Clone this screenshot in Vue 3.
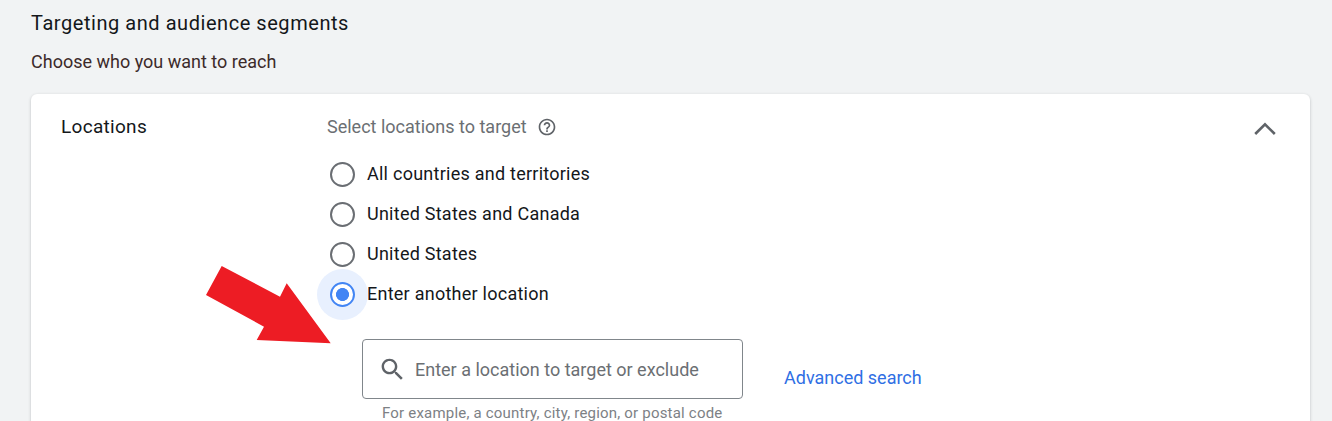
<script setup>
const options = [
  { label: 'All countries and territories', selected: false },
  { label: 'United States and Canada', selected: false },
  { label: 'United States', selected: false },
  { label: 'Enter another location', selected: true },
]
</script>

<template>
  <div class="page">
    <h2 class="title">Targeting and audience segments</h2>
    <p class="subtitle">Choose who you want to reach</p>
    <section class="card">
      <div class="name">Locations</div>
      <div class="body">
        <div class="heading">
          <span class="heading-text">Select locations to target</span>
          <svg class="help" viewBox="0 0 24 24" width="20" height="20" fill="#5f6368">
            <path d="M11 18h2v-2h-2v2zm1-16C6.48 2 2 6.48 2 12s4.48 10 10 10 10-4.48 10-10S17.52 2 12 2zm0 18c-4.41 0-8-3.59-8-8s3.59-8 8-8 8 3.59 8 8-3.59 8-8 8zm0-14c-2.21 0-4 1.79-4 4h2c0-1.1.9-2 2-2s2 .9 2 2c0 2-3 1.75-3 5h2c0-2.25 3-2.5 3-5 0-2.21-1.79-4-4-4z"/>
          </svg>
        </div>
        <ul class="options">
          <li v-for="o in options" :key="o.label" class="option">
            <span class="radio" :class="{ on: o.selected }"></span>
            <span class="option-label">{{ o.label }}</span>
          </li>
        </ul>
        <div class="search-row">
          <div class="search-col">
            <div class="input">
              <svg viewBox="0 0 24 24" width="29" height="29" fill="#5f6368">
                <path d="M15.5 14h-.79l-.28-.27C15.41 12.59 16 11.11 16 9.5 16 5.91 13.09 3 9.5 3S3 5.91 3 9.5 5.91 16 9.5 16c1.61 0 3.09-.59 4.23-1.57l.27.28v.79l5 4.99L20.49 19l-4.99-5zm-6 0C7.01 14 5 11.99 5 9.5S7.01 5 9.5 5 14 7.01 14 9.5 11.99 14 9.5 14z"/>
              </svg>
              <span>Enter a location to target or exclude</span>
            </div>
            <div class="hint">For example, a country, city, region, or postal code</div>
          </div>
          <a class="advanced">Advanced search</a>
        </div>
      </div>
      <svg class="chevron" viewBox="0 0 22 14" width="22" height="14" fill="none" stroke="#5f6368" stroke-width="2.6">
        <path d="M1.2 12 11 2.4 20.8 12"/>
      </svg>
    </section>
    <svg class="arrow" viewBox="0 0 1332 421" width="1332" height="421">
      <polygon fill="#ed1c24" points="221.7,266 280,296.7 286.7,283.3 330.7,343.3 256.7,340 264,326.7 206,295"/>
    </svg>
  </div>
</template>

<style scoped>
.page {
  position: relative;
  box-sizing: border-box;
  height: 421px;
  overflow: hidden;
  padding: 11px 22px 0 31px;
  background: #f1f3f4;
  font-family: Roboto, "Liberation Sans", sans-serif;
  color: #202124;
}
.title {
  margin: 0;
  font-size: 20px;
  line-height: 25px;
  font-weight: 450;
  letter-spacing: 0.55px;
  color: #14171a;
}
.subtitle {
  margin: 14px 0 0;
  font-size: 18px;
  line-height: 24px;
  color: #3c2a2a;
}
.card {
  display: flex;
  box-sizing: border-box;
  height: 420px;
  margin-top: 20px;
  padding: 21px 34px 0 30px;
  background: #fff;
  border-radius: 6px;
  box-shadow: 0 1px 3px rgba(60, 64, 67, 0.3);
}
.name {
  width: 266px;
  flex: none;
  font-size: 19px;
  font-weight: 450;
  line-height: 24px;
  letter-spacing: 0.3px;
  color: #14171a;
}
.body {
  flex: 1;
}
.heading {
  display: flex;
  align-items: center;
  gap: 10px;
  height: 24px;
  font-size: 18px;
  color: #6b6f73;
}
.heading-text {
  padding-bottom: 2px;
}
.help {
  flex: none;
}
.options {
  list-style: none;
  margin: 15px 0 0;
  padding: 0;
}
.option {
  display: flex;
  align-items: center;
  gap: 12.5px;
  height: 40px;
  padding-left: 2.5px;
  font-size: 18px;
  font-weight: 450;
  letter-spacing: 0.25px;
  color: #14171a;
}
.option-label {
  padding-bottom: 2px;
}
.radio {
  position: relative;
  box-sizing: border-box;
  width: 25px;
  height: 25px;
  border: 2.5px solid #6a6e73;
  border-radius: 50%;
}
.radio.on {
  border-color: #4285f4;
  box-shadow: 0 0 0 13px #e8f0fe;
  background: radial-gradient(circle, #4285f4 0 6.2px, #fff 6.8px);
}
.search-row {
  display: flex;
  margin: 25px 0 0 35px;
}
.input {
  display: flex;
  align-items: center;
  gap: 8px;
  box-sizing: border-box;
  width: 381px;
  height: 60px;
  padding-left: 15px;
  border: 1px solid #80868b;
  border-radius: 4px;
  font-size: 18px;
  color: #6b6f73;
}
.hint {
  margin: 6px 0 0 20px;
  font-size: 15px;
  line-height: 16px;
  letter-spacing: 0.2px;
  color: #7d8185;
}
.advanced {
  margin: 27px 0 0 41px;
  font-size: 18px;
  line-height: 24px;
  color: #2f6fe4;
}
.chevron {
  flex: none;
  margin-top: 7px;
}
.arrow {
  position: absolute;
  left: 0;
  top: 0;
  pointer-events: none;
}
</style>
